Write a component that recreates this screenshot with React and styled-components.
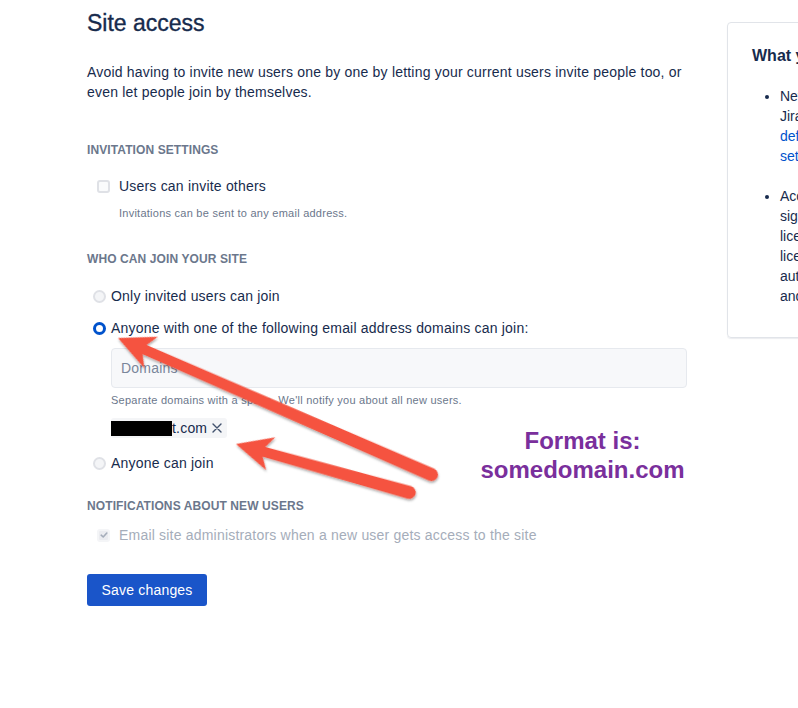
import React from "react";
import styled, { createGlobalStyle } from "styled-components";

const GlobalStyle = createGlobalStyle`
  html, body {
    margin: 0;
    padding: 0;
    background: #fff;
    overflow: hidden;
  }
  body {
    font-family: "Liberation Sans", Arial, sans-serif;
    color: #172b4d;
  }
`;

const Page = styled.div`
  position: relative;
  width: 798px;
  height: 708px;
  display: flex;
  align-items: flex-start;
  padding: 9px 0 0 87px;
  box-sizing: border-box;
`;

const Main = styled.div`
  width: 615px;
  flex-shrink: 0;
  display: flex;
  flex-direction: column;
  letter-spacing: 0.2px;
`;

const Title = styled.h1`
  margin: 0;
  font-size: 23px;
  line-height: 28px;
  font-weight: 400;
  letter-spacing: 0;
  -webkit-text-stroke: 0.35px #172b4d;
  color: #172b4d;
`;

const Intro = styled.p`
  margin: 25px 0 0;
  font-size: 14px;
  line-height: 20px;
`;

const SectionHeader = styled.h4`
  margin: ${(p) => p.$top}px 0 0;
  font-size: 12px;
  line-height: 16px;
  font-weight: 700;
  letter-spacing: 0.1px;
  color: #6b778c;
  text-transform: uppercase;
`;

const OptionRow = styled.label`
  display: flex;
  align-items: center;
  gap: ${(p) => (p.$radio ? 5 : 9)}px;
  margin: ${(p) => p.$top}px 0 0 ${(p) => (p.$radio ? 6 : 10)}px;
  font-size: 14px;
  line-height: 20px;
  color: ${(p) => (p.$disabled ? "#a5adba" : "#172b4d")};
`;

const Box = styled.span`
  width: 13px;
  height: 13px;
  box-sizing: border-box;
  border-radius: 3px;
  border: 2px solid ${(p) => (p.$disabled ? "#f4f5f7" : "#dfe1e6")};
  background: ${(p) => (p.$disabled ? "#ebecf0" : "#fafbfc")};
  display: flex;
  align-items: center;
  justify-content: center;
  flex-shrink: 0;
`;

const Radio = styled.span`
  width: 13px;
  height: 13px;
  box-sizing: border-box;
  border-radius: 50%;
  flex-shrink: 0;
  border: ${(p) => (p.$checked ? "3.5px solid #0052cc" : "2px solid #dfe1e6")};
  background: ${(p) => (p.$checked ? "#fff" : "#f4f5f7")};
`;

const Helper = styled.div`
  margin: ${(p) => p.$top}px 0 0 ${(p) => p.$left}px;
  font-size: 11px;
  line-height: 16px;
  letter-spacing: 0.25px;
  color: #6b778c;
`;

const Indented = styled.div`
  margin-left: 24px;
  display: flex;
  flex-direction: column;
  align-items: flex-start;
`;

const DomainInput = styled.div`
  margin-top: 10px;
  width: 576px;
  height: 40px;
  box-sizing: border-box;
  border: 1px solid #e6e9ee;
  border-radius: 4px;
  background: #f7f8fa;
  display: flex;
  align-items: center;
  padding: 0 9px;
  font-size: 14px;
  color: #7a869a;
`;

const Tag = styled.div`
  margin-top: 10px;
  height: 20px;
  display: flex;
  align-items: center;
  background: #f4f5f7;
  border-radius: 3px;
  padding-right: 5px;
  font-size: 14px;
  color: #172b4d;
`;

const Redacted = styled.span`
  width: 61px;
  height: 15px;
  background: #000;
`;

const Remove = styled.span`
  margin-left: 5px;
  display: flex;
  align-items: center;
`;

const SaveButton = styled.button`
  margin-top: 29px;
  align-self: flex-start;
  width: 120px;
  height: 32px;
  border: none;
  border-radius: 3px;
  background: #1a55c9;
  color: #fff;
  font-family: inherit;
  font-size: 14px;
  letter-spacing: 0.2px;
`;

const Card = styled.aside`
  margin: 13px 0 0 25px;
  width: 300px;
  flex-shrink: 0;
  box-sizing: border-box;
  border: 1px solid #e1e4e9;
  border-radius: 4px;
  box-shadow: 0 1px 1px rgba(9, 30, 66, 0.08);
  padding: 23px 24px 31px;
`;

const CardTitle = styled.h3`
  margin: 0;
  font-size: 16px;
  line-height: 20px;
  font-weight: 700;
`;

const List = styled.ul`
  margin: 20px 0 0;
  padding-left: 28px;
  font-size: 14px;
  line-height: 20px;
  white-space: nowrap;

  li + li {
    margin-top: 20px;
  }
`;

const Link = styled.span`
  color: #0052cc;
`;

const Overlay = styled.svg`
  position: absolute;
  left: 0;
  top: 0;
  pointer-events: none;
`;

const Callout = styled.div`
  position: absolute;
  left: 440px;
  top: 426px;
  width: 285px;
  text-align: center;
  font-size: 24px;
  line-height: 29px;
  font-weight: 700;
  color: #7a2f9c;
`;

const Arrow = ({ tip, tail }) => {
  const dx = tail[0] - tip[0];
  const dy = tail[1] - tip[1];
  const len = Math.hypot(dx, dy);
  const ang = (Math.atan2(dy, dx) * 180) / Math.PI;
  const d = `M0,0 L36,-17 L29,-5 L${len - 6},-6.5 A6.5,6.5 0 0 1 ${len - 6},6.5 L29,5 L36,17 Z`;
  return (
    <g transform={`translate(${tip[0]} ${tip[1]}) rotate(${ang})`} filter="url(#shade)">
      <path d={d} fill="#f5533f" />
    </g>
  );
};

const CheckMark = ({ color }) => (
  <svg width="8" height="8" viewBox="0 0 8 8">
    <path d="M1.2 4.2 L3.2 6 L6.8 2" fill="none" stroke={color} strokeWidth="1.6" strokeLinecap="round" strokeLinejoin="round" />
  </svg>
);

const Cross = () => (
  <svg width="10" height="10" viewBox="0 0 10 10">
    <path d="M1 1 L9 9 M9 1 L1 9" stroke="#42526e" strokeWidth="1.4" strokeLinecap="round" />
  </svg>
);

export default function App() {
  return (
    <>
      <GlobalStyle />
      <Page>
        <Main>
          <Title>Site access</Title>
          <Intro>
            Avoid having to invite new users one by one by letting your current users invite people too, or
            even let people join by themselves.
          </Intro>

          <SectionHeader $top={40}>Invitation settings</SectionHeader>
          <OptionRow $top={18}>
            <Box />
            Users can invite others
          </OptionRow>
          <Helper $top={9} $left={32}>Invitations can be sent to any email address.</Helper>

          <SectionHeader $top={30}>Who can join your site</SectionHeader>
          <OptionRow $radio $top={19}>
            <Radio />
            Only invited users can join
          </OptionRow>
          <OptionRow $radio $top={12}>
            <Radio $checked />
            Anyone with one of the following email address domains can join:
          </OptionRow>
          <Indented>
            <DomainInput>Domains</DomainInput>
            <Helper $top={4} $left={0}>Separate domains with a space. We'll notify you about all new users.</Helper>
            <Tag>
              <Redacted />
              t.com
              <Remove>
                <Cross />
              </Remove>
            </Tag>
          </Indented>
          <OptionRow $radio $top={15}>
            <Radio />
            Anyone can join
          </OptionRow>

          <SectionHeader $top={25}>Notifications about new users</SectionHeader>
          <OptionRow $top={11} $disabled>
            <Box $disabled>
              <CheckMark color="#a5adba" />
            </Box>
            Email site administrators when a new user gets access to the site
          </OptionRow>

          <SaveButton>Save changes</SaveButton>
        </Main>

        <Card>
          <CardTitle>What you need to know</CardTitle>
          <List>
            <li>
              New users will be added to
              <br />
              Jira Software based on your
              <br />
              <Link>default product access</Link>
              <br />
              <Link>settings</Link>.
            </li>
            <li>
              Accounts created through
              <br />
              signup will take up a
              <br />
              license. If you run out of
              <br />
              licenses, we'll stop
              <br />
              automatically adding users
              <br />
              and let you know.
            </li>
          </List>
        </Card>

        <Overlay width="798" height="708" viewBox="0 0 798 708">
          <defs>
            <filter id="shade" x="-10%" y="-30%" width="120%" height="160%">
              <feDropShadow dx="1" dy="1.5" stdDeviation="1.2" floodColor="#000" floodOpacity="0.35" />
            </filter>
          </defs>
          <Arrow tip={[118, 338]} tail={[437, 477]} />
          <Arrow tip={[236, 444]} tail={[415, 494]} />
        </Overlay>
        <Callout>
          Format is:
          <br />
          somedomain.com
        </Callout>
      </Page>
    </>
  );
}
